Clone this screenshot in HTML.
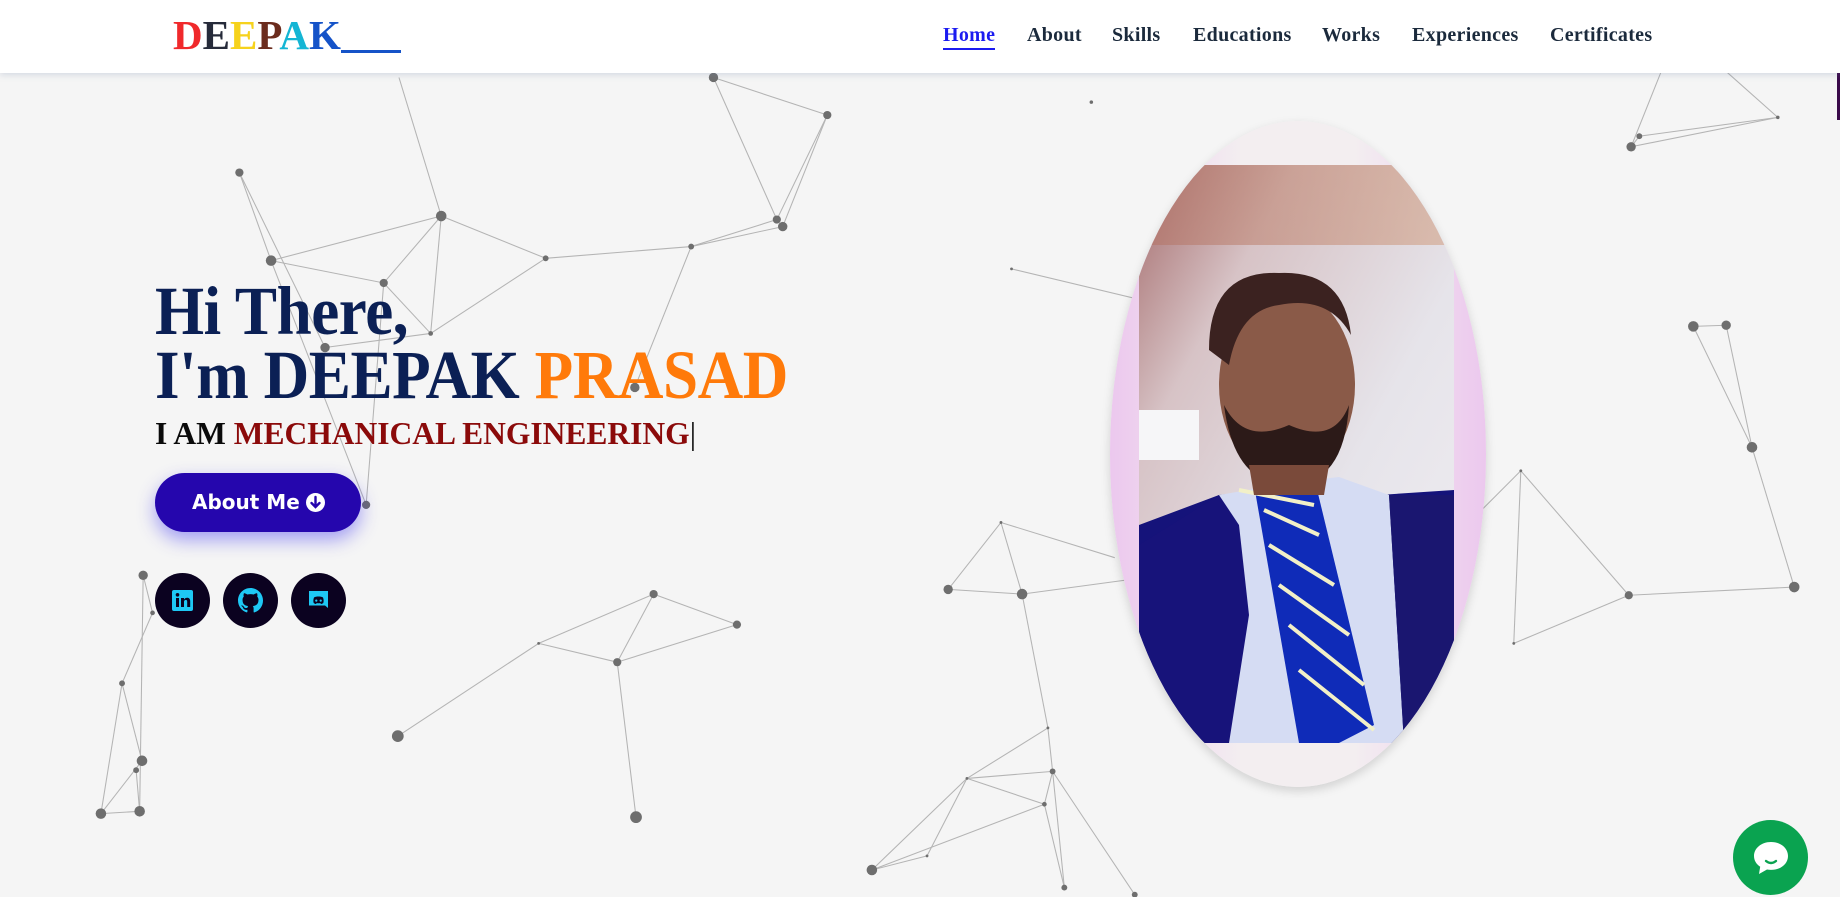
<!DOCTYPE html>
<html><head><meta charset="utf-8"><style>
*{margin:0;padding:0;box-sizing:border-box}
body{width:1840px;height:897px;overflow:hidden;background:#f5f5f5;position:relative;font-family:"Liberation Serif",serif}
header{position:absolute;left:0;top:0;width:1840px;height:73px;background:#fff;box-shadow:0 2px 6px rgba(120,140,170,.25);z-index:5}
.logo{position:absolute;left:173px;top:11px;font-size:41px;font-weight:bold;letter-spacing:0px}
.logo .u{display:inline-block;width:60px;border-bottom:3px solid #1553c8;height:42px;vertical-align:top}
nav{position:absolute;top:24px;left:0;font-size:20px;font-weight:bold;color:#1b2a3c}
nav span{position:absolute;white-space:nowrap;letter-spacing:.3px}
nav .h{color:#1b1bf0;border-bottom:2px solid #1b1bf0;padding-bottom:1px}
svg.bg{position:absolute;left:0;top:0}
.hi{position:absolute;left:155px;top:279px;font-size:69px;font-weight:bold;color:#0b2055;line-height:64px;letter-spacing:-.5px;transform:scaleX(.915);transform-origin:left top;white-space:nowrap}
.hi b{color:#ff7a0a}
.sub{position:absolute;left:155px;top:416px;font-size:31.5px;font-weight:bold;color:#0a0a0a;white-space:nowrap}
.sub b{color:#8b0a0a}
.btn{position:absolute;left:155px;top:473px;width:206px;height:59px;border-radius:30px;background:#2506ad;box-shadow:0 8px 18px rgba(60,50,240,.45);color:#fff;font-family:"DejaVu Sans","Liberation Sans",sans-serif;font-weight:bold;font-size:20px;line-height:59px;padding-left:37px}
.btn i{position:absolute;left:151px;top:20px;width:19px;height:19px;border-radius:50%;background:#fff}
.btn i svg{position:absolute;left:0;top:0}
.soc{position:absolute;top:573px;width:55px;height:55px;border-radius:50%;background:#0b0220}
.soc svg{position:absolute;left:15px;top:15px}
.oval{position:absolute;left:1110px;top:121px;width:376px;height:666px;border-radius:50%;overflow:hidden;background:linear-gradient(90deg,#ecc8ee 0%,#f3eef0 35%,#f3eef0 65%,#ecc8ee 100%);box-shadow:0 4px 10px rgba(0,0,0,.15)}
.chat{position:absolute;left:1733px;top:820px;width:75px;height:75px;border-radius:50%;background:#0aa350}
</style></head><body>
<svg class="bg" width="1840" height="897" viewBox="0 0 1568 764" preserveAspectRatio="none" stroke="#999" stroke-width="0.9" fill="#6e6e6e">
<g opacity=".7">
<line x1="608" y1="66" x2="705" y2="98"/><line x1="608" y1="66" x2="662" y2="187"/><line x1="705" y1="98" x2="662" y2="187"/><line x1="705" y1="98" x2="667" y2="193"/>
<line x1="589" y1="210" x2="662" y2="187"/><line x1="589" y1="210" x2="667" y2="193"/><line x1="465" y1="220" x2="589" y2="210"/><line x1="376" y1="184" x2="465" y2="220"/>
<line x1="376" y1="184" x2="327" y2="241"/><line x1="376" y1="184" x2="367" y2="284"/><line x1="376" y1="184" x2="231" y2="222"/><line x1="204" y1="147" x2="231" y2="222"/>
<line x1="204" y1="147" x2="277" y2="296"/><line x1="231" y1="222" x2="327" y2="241"/><line x1="327" y1="241" x2="367" y2="284"/><line x1="327" y1="241" x2="312" y2="430"/>
<line x1="277" y1="296" x2="367" y2="284"/><line x1="465" y1="220" x2="367" y2="284"/><line x1="589" y1="210" x2="541" y2="330"/><line x1="231" y1="222" x2="312" y2="430"/>
<line x1="862" y1="229" x2="1000" y2="262"/><line x1="1443" y1="278" x2="1471" y2="277"/><line x1="1443" y1="278" x2="1493" y2="381"/><line x1="1471" y1="277" x2="1493" y2="381"/>
<line x1="1493" y1="381" x2="1529" y2="500"/><line x1="1529" y1="500" x2="1388" y2="507"/><line x1="1388" y1="507" x2="1296" y2="401"/><line x1="1296" y1="401" x2="1290" y2="548"/><line x1="1290" y1="548" x2="1388" y2="507"/><line x1="1296" y1="401" x2="1262" y2="435"/>
<line x1="853" y1="445" x2="808" y2="502"/><line x1="853" y1="445" x2="871" y2="506"/><line x1="808" y1="502" x2="871" y2="506"/><line x1="871" y1="506" x2="893" y2="620"/><line x1="871" y1="506" x2="960" y2="494"/><line x1="853" y1="445" x2="950" y2="475"/>
<line x1="122" y1="490" x2="130" y2="522"/><line x1="130" y1="522" x2="104" y2="582"/><line x1="104" y1="582" x2="121" y2="648"/><line x1="104" y1="582" x2="86" y2="693"/><line x1="121" y1="648" x2="86" y2="693"/><line x1="116" y1="656" x2="119" y2="691"/><line x1="86" y1="693" x2="119" y2="691"/><line x1="122" y1="490" x2="119" y2="691"/>
<line x1="557" y1="506" x2="628" y2="532"/><line x1="557" y1="506" x2="526" y2="564"/><line x1="628" y1="532" x2="526" y2="564"/><line x1="459" y1="548" x2="526" y2="564"/><line x1="459" y1="548" x2="557" y2="506"/><line x1="459" y1="548" x2="339" y2="627"/><line x1="526" y1="564" x2="542" y2="696"/>
<line x1="893" y1="620" x2="824" y2="663"/><line x1="893" y1="620" x2="897" y2="657"/><line x1="824" y1="663" x2="890" y2="685"/><line x1="897" y1="657" x2="890" y2="685"/><line x1="824" y1="663" x2="790" y2="729"/><line x1="824" y1="663" x2="743" y2="741"/><line x1="790" y1="729" x2="743" y2="741"/><line x1="890" y1="685" x2="907" y2="756"/><line x1="897" y1="657" x2="907" y2="756"/><line x1="897" y1="657" x2="967" y2="762"/><line x1="743" y1="741" x2="890" y2="685"/><line x1="824" y1="663" x2="897" y2="657"/>
<line x1="1390" y1="125" x2="1397" y2="116"/><line x1="1397" y1="116" x2="1515" y2="100"/><line x1="1390" y1="125" x2="1515" y2="100"/><line x1="1416" y1="60" x2="1390" y2="125"/><line x1="1470" y1="60" x2="1515" y2="100"/><line x1="340" y1="66" x2="376" y2="184"/>
</g>
<g stroke="none">
<circle cx="608" cy="66" r="4"/><circle cx="705" cy="98" r="3.5"/><circle cx="204" cy="147" r="3.5"/><circle cx="376" cy="184" r="4.5"/><circle cx="465" cy="220" r="2.5"/><circle cx="589" cy="210" r="2.5"/><circle cx="662" cy="187" r="3.5"/><circle cx="667" cy="193" r="4"/><circle cx="231" cy="222" r="4.5"/><circle cx="327" cy="241" r="3.5"/><circle cx="277" cy="296" r="4"/><circle cx="367" cy="284" r="2"/><circle cx="541" cy="330" r="4"/><circle cx="312" cy="430" r="3.5"/><circle cx="930" cy="87" r="1.5"/><circle cx="862" cy="229" r="1.2"/>
<circle cx="1443" cy="278" r="4.5"/><circle cx="1471" cy="277" r="4"/><circle cx="1493" cy="381" r="4.5"/><circle cx="1529" cy="500" r="4.5"/><circle cx="1388" cy="507" r="3.5"/><circle cx="1296" cy="401" r="1.2"/><circle cx="1290" cy="548" r="1.2"/><circle cx="1390" cy="125" r="4"/><circle cx="1397" cy="116" r="2.5"/><circle cx="1515" cy="100" r="1.5"/>
<circle cx="853" cy="445" r="1.2"/><circle cx="808" cy="502" r="4"/><circle cx="871" cy="506" r="4.5"/><circle cx="122" cy="490" r="4"/><circle cx="130" cy="522" r="2"/><circle cx="104" cy="582" r="2.5"/><circle cx="121" cy="648" r="4.5"/><circle cx="116" cy="656" r="2.5"/><circle cx="86" cy="693" r="4.5"/><circle cx="119" cy="691" r="4.5"/>
<circle cx="557" cy="506" r="3.5"/><circle cx="628" cy="532" r="3.5"/><circle cx="459" cy="548" r="1.2"/><circle cx="526" cy="564" r="3.5"/><circle cx="339" cy="627" r="5"/><circle cx="542" cy="696" r="5"/>
<circle cx="893" cy="620" r="1.2"/><circle cx="824" cy="663" r="1.2"/><circle cx="897" cy="657" r="2.5"/><circle cx="890" cy="685" r="2"/><circle cx="790" cy="729" r="1.2"/><circle cx="743" cy="741" r="4.5"/><circle cx="907" cy="756" r="2.5"/><circle cx="967" cy="762" r="2.5"/>
</g></svg>

<header>
<div class="logo"><span style="color:#f0292b">D</span><span style="color:#262b3a">E</span><span style="color:#f6d21c">E</span><span style="color:#6b2c1d">P</span><span style="color:#14b5d4">A</span><span style="color:#1553c8">K</span><span class="u"></span></div>
<nav>
<span class="h" style="left:943px">Home</span><span style="left:1027px">About</span><span style="left:1112px">Skills</span><span style="left:1193px">Educations</span><span style="left:1322px">Works</span><span style="left:1412px">Experiences</span><span style="left:1550px">Certificates</span>
</nav>
</header>
<div style="position:absolute;right:0;top:0;width:3px;height:120px;background:#3a0a4a"></div>

<div class="hi">Hi There,<br>I'm DEEPAK <b>PRASAD</b></div>
<div class="sub">I AM <b>MECHANICAL ENGINEERING</b><span style="font-weight:normal">|</span></div>
<div class="btn">About Me<i><svg width="19" height="19" viewBox="0 0 19 19"><path d="M9.5 4v10M5.5 10l4 4 4-4" stroke="#2506ad" stroke-width="2.4" fill="none" stroke-linecap="round"/></svg></i></div>

<div class="soc" style="left:155px"><svg width="25" height="25" viewBox="0 0 25 25"><rect x="2" y="2" width="21" height="21" rx="2" fill="#1ec8f5"/><rect x="6" y="10" width="3" height="9" fill="#0b0220"/><circle cx="7.5" cy="6.8" r="1.8" fill="#0b0220"/><path d="M11 10h3v1.5c.8-1.3 2-1.8 3.2-1.8 2 0 3 1.3 3 3.6V19h-3v-5.3c0-1.2-.5-1.8-1.4-1.8s-1.8.6-1.8 1.9V19h-3z" fill="#0b0220"/></svg></div>
<div class="soc" style="left:223px"><svg width="25" height="25" viewBox="0 0 16 16"><path fill="#1ec8f5" d="M8 0C3.58 0 0 3.58 0 8c0 3.54 2.29 6.53 5.47 7.59.4.07.55-.17.55-.38v-1.33c-2.23.48-2.7-1.07-2.7-1.07-.36-.92-.89-1.17-.89-1.17-.73-.5.05-.49.05-.49.8.06 1.23.83 1.23.83.71 1.23 1.87.87 2.33.66.07-.52.28-.87.5-1.07-1.78-.2-3.64-.89-3.64-3.95 0-.87.31-1.590.82-2.15-.08-.2-.36-1.02.08-2.12 0 0 .67-.21 2.2.82a7.6 7.6 0 0 1 4 0c1.53-1.04 2.2-.82 2.2-.82.44 1.1.16 1.92.08 2.12.51.56.82 1.27.82 2.15 0 3.07-1.87 3.75-3.65 3.95.29.25.54.73.54 1.48v2.2c0 .21.15.46.55.38A8.01 8.01 0 0 0 16 8c0-4.42-3.58-8-8-8z"/></svg></div>
<div class="soc" style="left:291px"><svg width="25" height="25" viewBox="0 0 25 25"><path d="M3 3h19v17l-3-2.5H3z" fill="#1ec8f5"/><path d="M8 9.5c2-1.3 7-1.3 9 0 .8 2 .8 4 .3 5.5-1 .7-1.8 1-2.4 1l-.6-1c-1.3.4-2.3.4-3.6 0l-.6 1c-.6 0-1.4-.3-2.4-1-.5-1.5-.5-3.5.3-5.5z" fill="#0b0220"/><circle cx="10.3" cy="12.6" r="1.1" fill="#1ec8f5"/><circle cx="14.7" cy="12.6" r="1.1" fill="#1ec8f5"/></svg></div>

<div class="oval">
<svg style="position:absolute;left:29px;top:44px" width="315" height="578" viewBox="0 0 315 578">
<defs><linearGradient id="bgp" x1="0" y1="0" x2="1" y2="1"><stop offset="0" stop-color="#a46a6a"/><stop offset=".25" stop-color="#d7c3c6"/><stop offset=".6" stop-color="#e6e4ea"/><stop offset="1" stop-color="#f1eef2"/></linearGradient>
<linearGradient id="bgt" x1="0" y1="0" x2="1" y2="0"><stop offset="0" stop-color="#b27367"/><stop offset="1" stop-color="#d3a58a"/></linearGradient></defs>
<rect width="315" height="578" fill="url(#bgp)"/>
<rect width="315" height="80" fill="url(#bgt)" opacity=".6"/>
<rect x="0" y="245" width="60" height="50" fill="#f6f6f8"/>
<path d="M0 360 L80 330 L120 325 L180 318 L240 330 L315 325 L315 578 L0 578Z" fill="#15137a"/>
<path d="M80 330 L150 318 L200 312 L250 330 L265 578 L90 578Z" fill="#d5dcf3"/>
<path d="M115 320 L175 312 L235 560 L200 578 L160 578 Z" fill="#0f2bb8"/>
<path d="M125 345 L180 370 M130 380 L195 420 M140 420 L210 470 M150 460 L225 520 M160 505 L235 565 M100 325 L175 340" stroke="#f2f0c8" stroke-width="4"/>
<path d="M90 578 L30 578 L0 520 L0 380 L80 330 L100 360 L110 450Z" fill="#17137a"/>
<path d="M250 330 L315 330 L315 578 L265 578Z" fill="#1a1670"/>
<ellipse cx="148" cy="220" rx="68" ry="95" fill="#8a5a48"/>
<path d="M85 240 Q95 320 150 320 Q205 320 210 240 Q195 280 150 260 Q105 280 85 240Z" fill="#2c1a18"/>
<path d="M70 185 Q70 105 140 108 Q205 105 212 170 Q190 130 140 140 Q100 145 90 200 Z" fill="#3b2220"/>
<path d="M110 300 L190 300 L185 330 L115 330Z" fill="#7a4a3a"/>
</svg>
</div>

<div class="chat"><svg style="position:absolute;left:17px;top:19px" width="42" height="40" viewBox="0 0 42 40"><path d="M21 3C11 3 4 9.5 4 17c0 4.5 2.4 8.3 6.2 10.7L9 35l8-4.5c1.3.3 2.6.4 4 .4 10 0 17-6.3 17-13.9S31 3 21 3z" fill="#fff"/><path d="M16 22q5 4 10 0" stroke="#0aa350" stroke-width="2.4" fill="none" stroke-linecap="round"/></svg></div>
</body></html>
